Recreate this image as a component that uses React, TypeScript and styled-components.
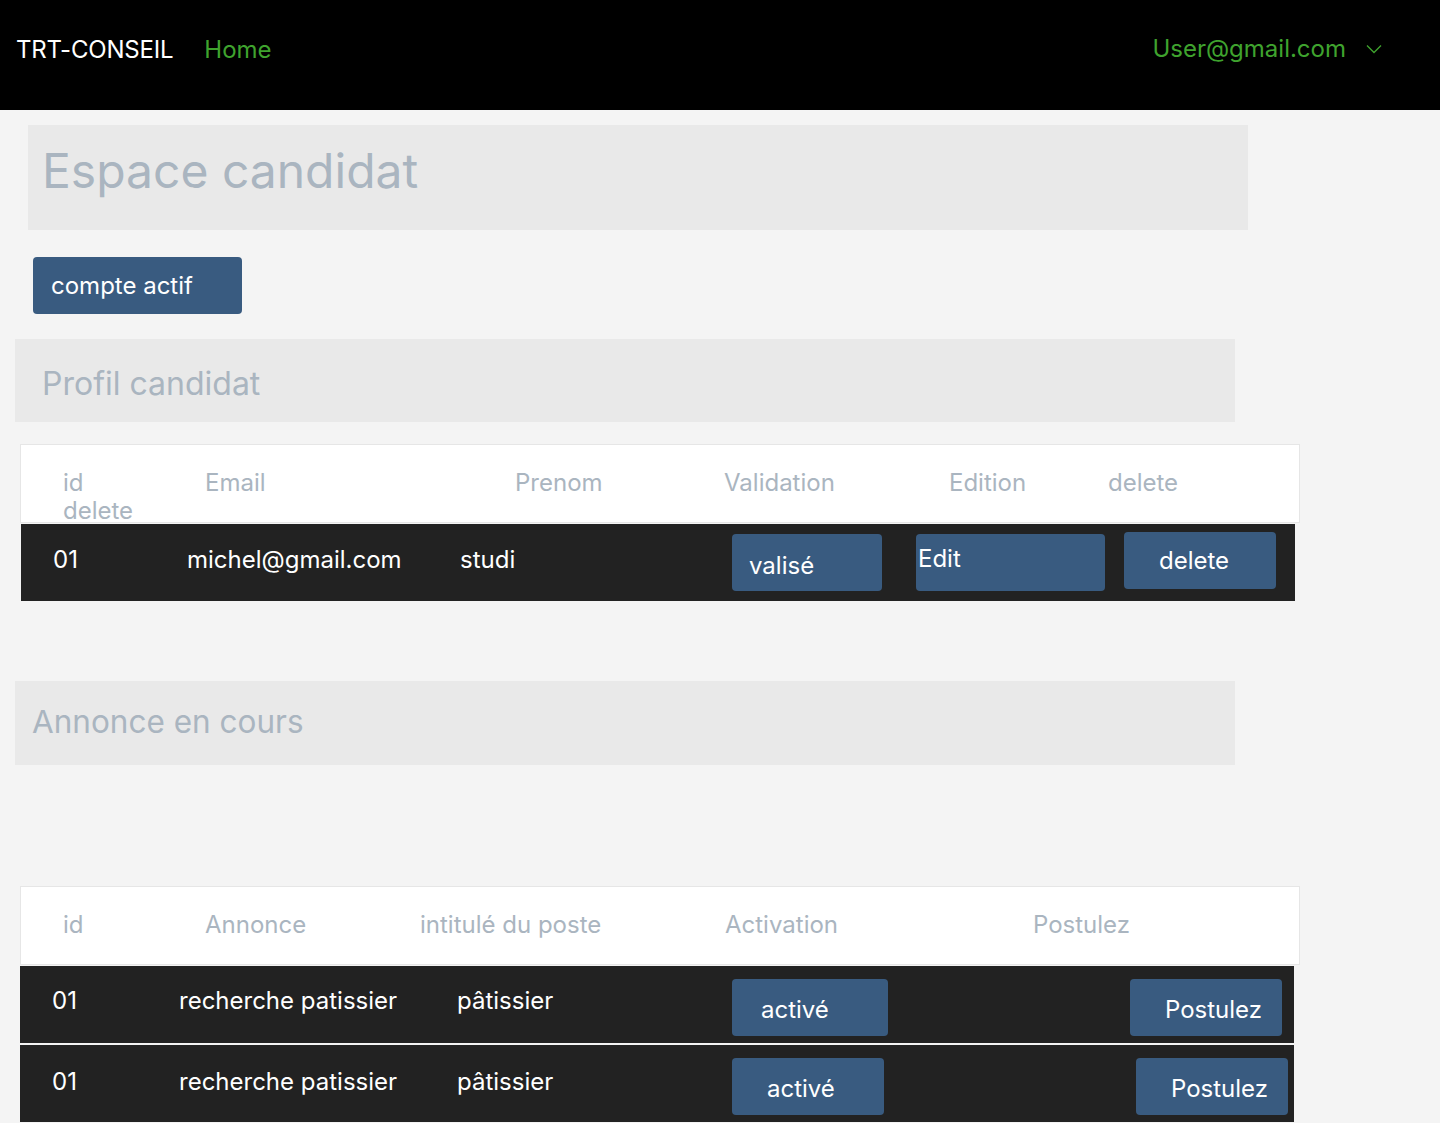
import React from "react";
import styled, { createGlobalStyle } from "styled-components";

const Global = createGlobalStyle`
  html, body { margin: 0; padding: 0; background: #f4f4f4; }
  body { font-family: Inter, "Noto Sans", sans-serif; }
  * { box-sizing: border-box; }
`;

const Page = styled.div`
  width: 1440px;
  min-height: 1123px;
  background: #f4f4f4;
  overflow: hidden;
`;

const NavBar = styled.header`
  height: 110px;
  background: #000;
  display: flex;
  align-items: flex-start;
  padding: 34px 58px 0 16px;
`;

const Brand = styled.span`
  color: #fff;
  font-size: 24px;
  font-weight: 400;
  line-height: 32px;
  letter-spacing: -0.2px;
`;

const NavLink = styled.a`
  color: #3fa32e;
  font-size: 24px;
  line-height: 32px;
  margin-left: 31px;
  text-decoration: none;
`;

const UserMenu = styled.div`
  margin-left: auto;
  margin-top: -1px;
  display: flex;
  align-items: center;
  gap: 20px;
  color: #3fa32e;
  font-size: 24px;
  line-height: 32px;
`;

const Main = styled.main`
  display: flex;
  flex-direction: column;
  align-items: flex-start;
`;

const TitleBox = styled.div<{ $ml: number; $h: number; $mt: number; $pl: number; $size: number; $shift: number }>`
  margin-left: ${(p) => p.$ml}px;
  margin-top: ${(p) => p.$mt}px;
  width: 1220px;
  height: ${(p) => p.$h}px;
  background: #e9e9e9;
  display: flex;
  align-items: center;
  padding-left: ${(p) => p.$pl}px;
  padding-top: ${(p) => Math.max(p.$shift, 0) * 2}px;
  padding-bottom: ${(p) => Math.max(-p.$shift, 0) * 2}px;
  color: #aab5c0;
  font-size: ${(p) => p.$size}px;
  font-weight: 400;
`;

const Button = styled.button<{ $w: number; $h?: number; $align?: string; $pl?: number; $pt?: number }>`
  width: ${(p) => p.$w}px;
  height: ${(p) => p.$h ?? 57}px;
  background: #395b80;
  border: none;
  border-radius: 4px;
  color: #fff;
  font-family: Inter, "Noto Sans", sans-serif;
  font-size: 24px;
  display: flex;
  align-items: ${(p) => p.$align ?? "center"};
  justify-content: flex-start;
  padding: ${(p) => p.$pt ?? 0}px 0 0 ${(p) => p.$pl ?? 18}px;
  cursor: pointer;
`;

const AccountButton = styled(Button)`
  margin: 27px 0 0 33px;
`;

const Table = styled.div<{ $mt: number }>`
  margin-top: ${(p) => p.$mt}px;
  margin-left: 20px;
  display: flex;
  flex-direction: column;
`;

const HeadRow = styled.div<{ $cols: string }>`
  width: 1280px;
  height: 79px;
  background: #fff;
  border: 1px solid #e6e6e6;
  display: grid;
  grid-template-columns: ${(p) => p.$cols};
  align-items: start;
  padding: 24px 0 0 42px;
  color: #aab5c0;
  font-size: 24px;
  line-height: 28px;
`;

const HeadCell = styled.div`
  white-space: nowrap;
`;

const BodyRow = styled.div<{ $cols: string; $w: number; $ml?: number; $mt?: number }>`
  width: ${(p) => p.$w}px;
  height: 77px;
  margin-left: ${(p) => p.$ml ?? 0}px;
  margin-top: ${(p) => p.$mt ?? 0}px;
  background: #222;
  display: grid;
  grid-template-columns: ${(p) => p.$cols};
  align-items: center;
  color: #fff;
  font-size: 24px;
`;

const Cell = styled.div<{ $dy?: number; $pl?: number }>`
  white-space: nowrap;
  padding-left: ${(p) => p.$pl ?? 0}px;
  transform: translateY(${(p) => p.$dy ?? 0}px);
`;

const Chevron = () => (
  <svg width="16" height="10" viewBox="0 0 16 10" fill="none">
    <path d="M1 1.5 L8 8.5 L15 1.5" stroke="#3fa32e" strokeWidth="1.3" />
  </svg>
);

export default function App() {
  return (
    <Page>
      <Global />
      <NavBar>
        <Brand>TRT-CONSEIL</Brand>
        <NavLink href="#">Home</NavLink>
        <UserMenu>
          <span>User@gmail.com</span>
          <Chevron />
        </UserMenu>
      </NavBar>
      <Main>
        <TitleBox $ml={28} $mt={15} $h={105} $pl={14} $size={48} $shift={-7}>
          Espace candidat
        </TitleBox>
        <AccountButton $w={209}>compte actif</AccountButton>
        <TitleBox $ml={15} $mt={25} $h={83} $pl={27} $size={32} $shift={3}>
          Profil candidat
        </TitleBox>

        <Table $mt={22}>
          <HeadRow $cols="142px 310px 209px 225px 159px 1fr">
            <HeadCell>
              id
              <br />
              delete
            </HeadCell>
            <HeadCell>Email</HeadCell>
            <HeadCell>Prenom</HeadCell>
            <HeadCell>Validation</HeadCell>
            <HeadCell>Edition</HeadCell>
            <HeadCell>delete</HeadCell>
          </HeadRow>
          <BodyRow $w={1274} $ml={1} $mt={1} $cols="166px 273px 272px 184px 208px 1fr">
            <Cell $pl={32} $dy={-3}>01</Cell>
            <Cell $dy={-3}>michel@gmail.com</Cell>
            <Cell $dy={-3}>studi</Cell>
            <Cell $dy={0}>
              <Button $w={150} $pl={17} $pt={5}>valisé</Button>
            </Cell>
            <Cell>
              <Button $w={189} $pl={2} $align="flex-start" $pt={10}>
                Edit
              </Button>
            </Cell>
            <Cell $dy={-2}>
              <Button $w={152} $pl={35}>delete</Button>
            </Cell>
          </BodyRow>
        </Table>

        <TitleBox $ml={15} $mt={80} $h={84} $pl={17} $size={31.5} $shift={-2}>
          Annonce en cours
        </TitleBox>

        <Table $mt={121}>
          <HeadRow $cols="142px 215px 305px 308px 1fr">
            <HeadCell>id</HeadCell>
            <HeadCell>Annonce</HeadCell>
            <HeadCell>intitulé du poste</HeadCell>
            <HeadCell>Activation</HeadCell>
            <HeadCell>Postulez</HeadCell>
          </HeadRow>
          <BodyRow $w={1274} $mt={1} $cols="159px 278px 275px 398px 1fr">
            <Cell $pl={32} $dy={-4}>01</Cell>
            <Cell $dy={-4}>recherche patissier</Cell>
            <Cell $dy={-4}>pâtissier</Cell>
            <Cell $dy={3}>
              <Button $w={156} $pl={29} $pt={4}>activé</Button>
            </Cell>
            <Cell $dy={3}>
              <Button $w={152} $pl={35} $pt={4}>Postulez</Button>
            </Cell>
          </BodyRow>
          <BodyRow $w={1274} $mt={2} $cols="159px 278px 275px 404px 1fr">
            <Cell $pl={32} $dy={-2}>01</Cell>
            <Cell $dy={-2}>recherche patissier</Cell>
            <Cell $dy={-2}>pâtissier</Cell>
            <Cell $dy={3}>
              <Button $w={152} $pl={35} $pt={4}>activé</Button>
            </Cell>
            <Cell $dy={3}>
              <Button $w={152} $pl={35} $pt={4}>Postulez</Button>
            </Cell>
          </BodyRow>
        </Table>
      </Main>
    </Page>
  );
}
